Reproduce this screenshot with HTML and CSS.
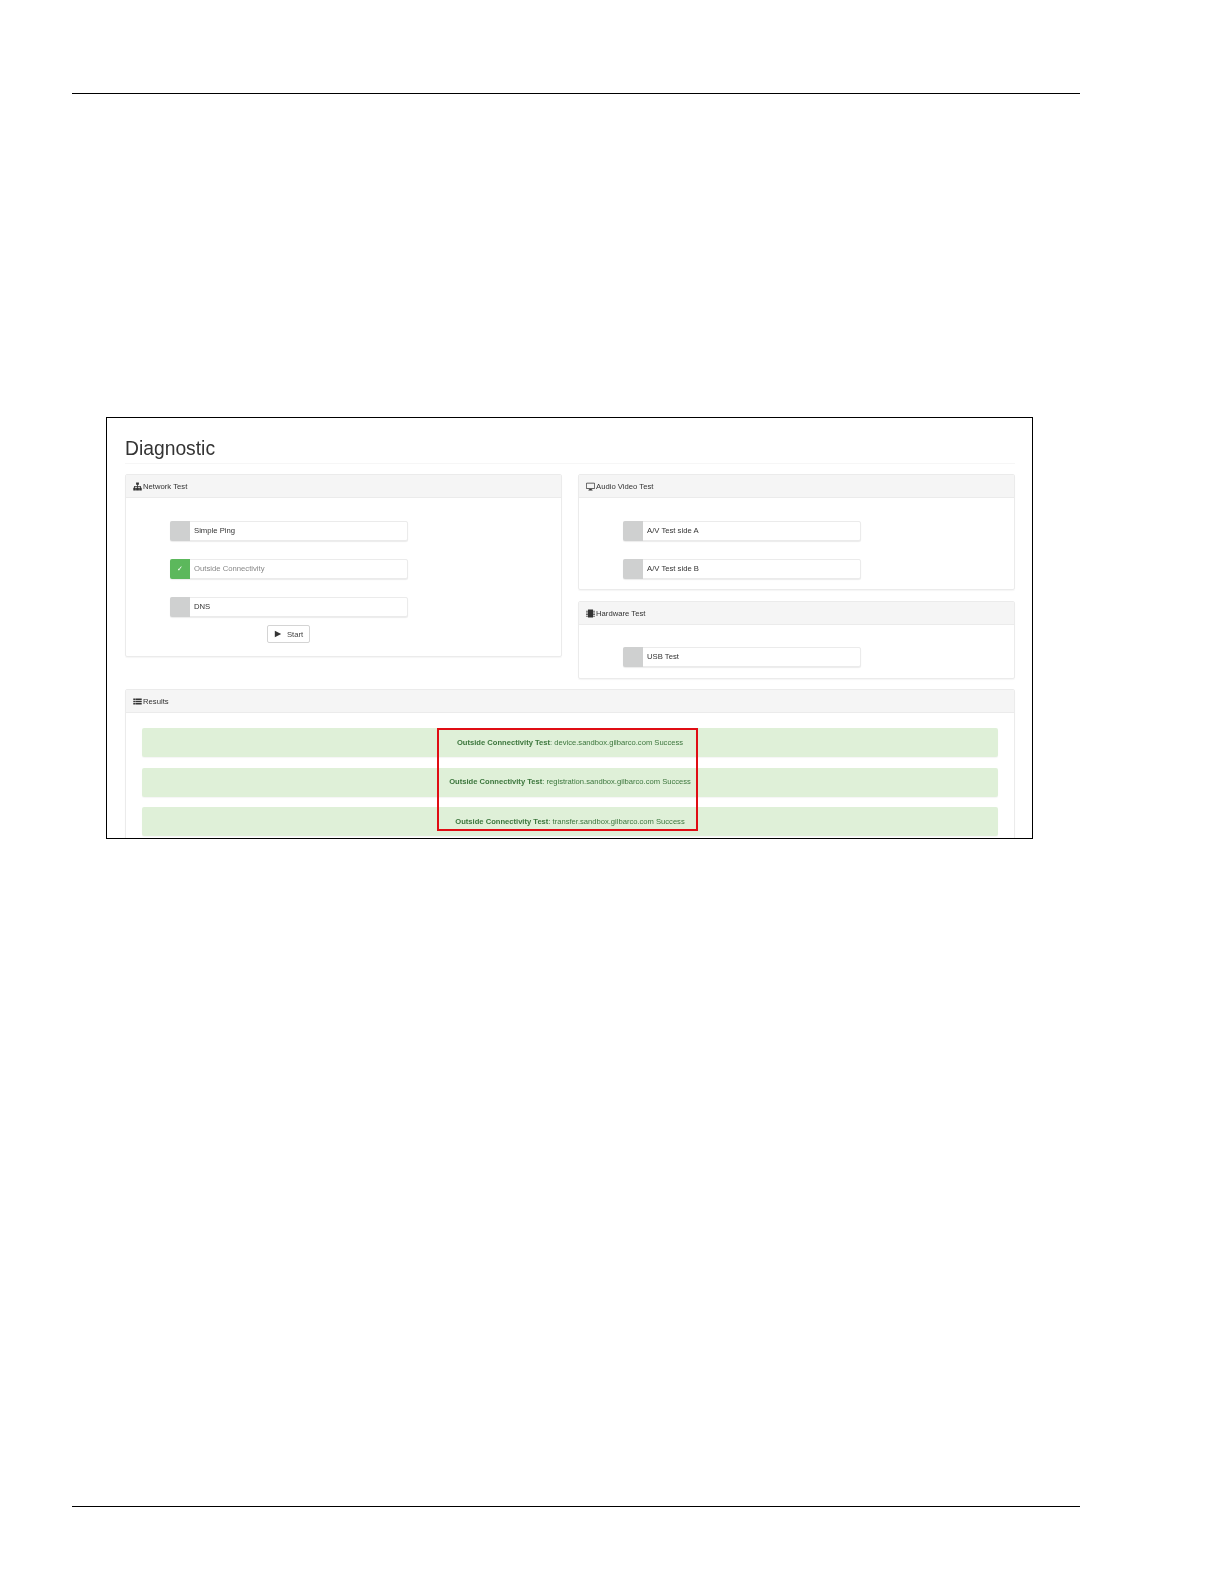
FILE: index.html
```html
<!DOCTYPE html>
<html lang="en">
<head>
<meta charset="utf-8">
<title>Diagnostic</title>
<link rel="stylesheet" href="styles.css">
</head>
<body>
<div class="page">
  <header class="page-head"></header>
  <figure class="shot">
    <div class="shot-inner">
      <h1 class="title">Diagnostic</h1>
      <div class="cols">
        <section class="panel">
          <div class="panel-head">
            <svg class="ico" viewBox="0 0 16 16"><path d="M5.500 1h5v4H8.700v2H14v3h1.500v5h-4.500v-5h1.500V8.500H8.700V10h1.800v5h-5v-5h1.700V8.500H3.500V10H5v5H.5v-5H2V7h5.300V5H5.500z"/></svg>
            <span>Network Test</span>
          </div>
          <div class="panel-body net">
            <div class="check"><span class="box"></span><span class="lbl">Simple Ping</span></div>
            <div class="check on"><span class="box">&#10003;</span><span class="lbl">Outside Connectivity</span></div>
            <div class="check"><span class="box"></span><span class="lbl">DNS</span></div>
            <button class="btn" type="button"><svg class="play" viewBox="0 0 10 10"><path d="M1 1l8 4-8 4z"/></svg>Start</button>
          </div>
        </section>
        <div class="stack">
          <section class="panel">
            <div class="panel-head">
              <svg class="ico" viewBox="0 0 16 16"><path fill-rule="evenodd" d="M1.500 1.500h13a1.200 1.200 0 0 1 1.200 1.200v8.600a1.200 1.200 0 0 1-1.200 1.200H10l.4 1.400h1.300V15H4.300v-1.100h1.300l.4-1.400H1.500a1.200 1.200 0 0 1-1.200-1.200V2.700a1.200 1.200 0 0 1 1.200-1.200zm0 1.300v8.400h13V2.800z"/></svg>
              <span>Audio Video Test</span>
            </div>
            <div class="panel-body av">
              <div class="check"><span class="box"></span><span class="lbl">A/V Test side A</span></div>
              <div class="check"><span class="box"></span><span class="lbl">A/V Test side B</span></div>
            </div>
          </section>
          <section class="panel">
            <div class="panel-head">
              <svg class="ico" viewBox="0 0 16 16"><path d="M3.500 1h9v14h-9zM.5 3H3v1.800H.5zm0 3H3v1.800H.5zm0 3H3v1.800H.5zm0 3H3v1.800H.5zM13 3h2.500v1.800H13zm0 3h2.500v1.800H13zm0 3h2.500v1.800H13zm0 3h2.500v1.800H13z"/></svg>
              <span>Hardware Test</span>
            </div>
            <div class="panel-body hw">
              <div class="check"><span class="box"></span><span class="lbl">USB Test</span></div>
            </div>
          </section>
        </div>
      </div>
      <section class="panel results">
        <div class="panel-head">
          <svg class="ico" viewBox="0 0 16 16"><path d="M.5 2.500h3v2.800h-3zm3.600 0h11.400v2.800H4.100zM.5 6.600h3v2.800h-3zm3.600 0h11.400v2.800H4.100zM.5 10.700h3v2.800h-3zm3.600 0h11.400v2.800H4.100z"/></svg>
          <span>Results</span>
        </div>
        <div class="panel-body res">
          <div class="alert"><b>Outside Connectivity Test</b>: device.sandbox.gilbarco.com Success</div>
          <div class="alert"><b>Outside Connectivity Test</b>: registration.sandbox.gilbarco.com Success</div>
          <div class="alert"><b>Outside Connectivity Test</b>: transfer.sandbox.gilbarco.com Success</div>
        </div>
      </section>
    </div>
    <div class="mark"></div>
  </figure>
  <footer class="page-foot"></footer>
</div>
</body>
</html>
```
FILE: styles.css
```css
html, body { margin: 0; padding: 0; background: #fff; }
body { font-family: "Liberation Sans", Arial, sans-serif; color: #333; }

.page { width: 1008px; height: 1584px; margin-left: 72px; display: flex; flex-direction: column; }
.page-head { height: 93px; border-bottom: 1px solid #000; flex: none; }
.page-foot { height: 0; border-bottom: 1px solid #000; margin-top: 667px; flex: none; }

.shot { position: relative; flex: none; width: 927px; height: 422px; margin: 323px 0 0 34px; border: 1px solid #000; overflow: hidden; box-sizing: border-box; }
.shot-inner { padding: 0 17px 0 18px; filter: blur(0.6px); }

.title { margin: 0 0 10px; height: 27px; padding-top: 18px; font-size: 19.3px; line-height: 25px; font-weight: 400; color: #333; border-bottom: 1px solid #f6f6f6; }

.cols { display: grid; grid-template-columns: 437px 437px; column-gap: 16px; align-items: start; }
.stack { display: flex; flex-direction: column; gap: 11px; }

.panel { border: 1px solid #ebebeb; border-radius: 2px; background: #fff; box-shadow: 0 1px 1px rgba(0,0,0,.04); }
.panel-head { height: 22px; background: #f5f5f5; border-bottom: 1px solid #ebebeb; display: flex; align-items: center; gap: 1px; padding-left: 7px; font-size: 7.7px; color: #333; }
.ico { width: 9px; height: 9px; fill: #333; flex: none; }

.panel-body { display: flex; flex-direction: column; }
.net { padding: 23px 0 0 44px; height: 158px; box-sizing: border-box; }
.av { padding: 23px 0 10px 44px; }
.hw { padding: 22px 0 11px 44px; }

.check { width: 238px; height: 20px; box-sizing: border-box; display: flex; align-items: center; border: 1px solid #ebebeb; border-radius: 2px; background: #fff; box-shadow: 0 1px 1px rgba(0,0,0,.08); font-size: 7.7px; color: #333; margin-bottom: 18px; flex: none; }
.check:last-child { margin-bottom: 0; }
.net .check:nth-child(3) { margin-bottom: 8px; }
.box { width: 20px; height: 20px; margin: -1px 0 -1px -1px; flex: none; background: #cfd0d0; border-radius: 2px 0 0 2px; color: #fff; font-size: 7px; display: flex; align-items: center; justify-content: center; }
.lbl { padding: 0 0 1px 4px; }
.on .box { background: #5cb85c; }
.on .lbl { color: #888; }

.btn { align-self: flex-start; margin-left: 97px; width: 43px; height: 18px; padding: 0; background: #fff; border: 1px solid #d4d4d4; border-radius: 2px; font: 7.7px "Liberation Sans", Arial, sans-serif; color: #444; display: flex; align-items: center; justify-content: center; gap: 5px; }
.play { width: 8px; height: 8px; fill: #333; }

.results { margin-top: 10px; }
.res { padding: 15px 16px 20px; gap: 10.5px; }
.alert { height: 29px; flex: none; box-sizing: border-box; background: #dff0d8; border-radius: 2px; box-shadow: 0 1px 1px rgba(0,0,0,.04); color: #3c763d; font-size: 7.6px; display: flex; align-items: center; justify-content: center; white-space: pre-wrap; padding-bottom: 1px; }
.alert b { font-weight: 700; }

.mark { position: absolute; left: 330px; top: 310px; width: 261px; height: 103px; box-sizing: border-box; border: 2px solid #e00d14; }
```
